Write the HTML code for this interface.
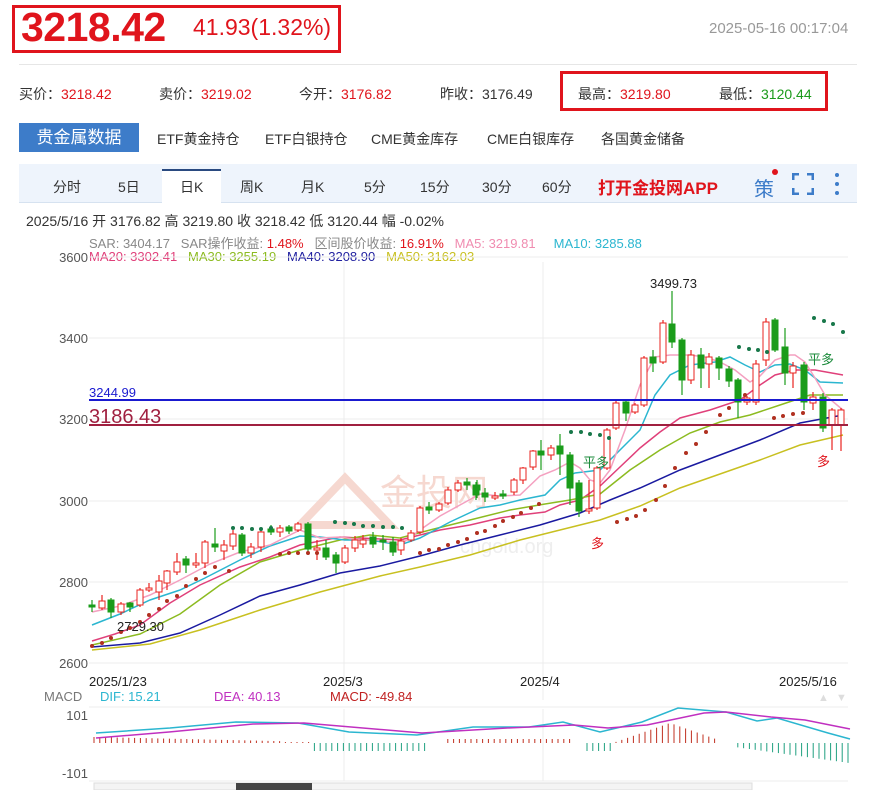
<!DOCTYPE html>
<html><head><meta charset="utf-8">
<style>
*{margin:0;padding:0;box-sizing:border-box}
body{width:874px;height:790px;background:#fff;font-family:"Liberation Sans","Noto Sans CJK SC",sans-serif;position:relative;overflow:hidden;color:#333}
.a{position:absolute;white-space:nowrap}
</style></head><body>
<div class="a" style="left:12px;top:5px;width:329px;height:48px;border:3px solid #e0141c"></div>
<div class="a" style="left:21px;top:4px;font-size:41px;font-weight:bold;color:#e0141c;letter-spacing:-0.5px">3218.42</div>
<div class="a" style="left:193px;top:14px;font-size:23px;color:#e0141c">41.93(1.32%)</div>
<div class="a" style="left:709px;top:20px;font-size:15px;color:#999">2025-05-16 00:17:04</div>
<div class="a" style="left:19px;top:64px;width:838px;height:1px;background:#e6e6e6"></div>
<div class="a" style="left:560px;top:71px;width:268px;height:40px;border:3px solid #e0141c"></div>
<div class="a" style="top:84px;left:19px;font-size:14px">买价：<span style="color:#e0141c">3218.42</span></div>
<div class="a" style="top:84px;left:159px;font-size:14px">卖价：<span style="color:#e0141c">3219.02</span></div>
<div class="a" style="top:84px;left:299px;font-size:14px">今开：<span style="color:#e0141c">3176.82</span></div>
<div class="a" style="top:84px;left:440px;font-size:14px">昨收：3176.49</div>
<div class="a" style="top:84px;left:578px;font-size:14px">最高：<span style="color:#e0141c">3219.80</span></div>
<div class="a" style="top:84px;left:719px;font-size:14px">最低：<span style="color:#1a9a1a">3120.44</span></div>
<div class="a" style="left:19px;top:123px;width:120px;height:29px;background:#3d7cc9;color:#fff;font-size:17px;line-height:29px;text-align:center">贵金属数据</div>
<div class="a" style="left:157px;top:129px;font-size:14px">ETF黄金持仓</div>
<div class="a" style="left:265px;top:129px;font-size:14px">ETF白银持仓</div>
<div class="a" style="left:371px;top:129px;font-size:14px">CME黄金库存</div>
<div class="a" style="left:487px;top:129px;font-size:14px">CME白银库存</div>
<div class="a" style="left:601px;top:129px;font-size:14px">各国黄金储备</div>
<div class="a" style="left:19px;top:164px;width:838px;height:39px;background:#eef4fc;border-bottom:1px solid #d6e2f0"></div>
<div class="a" style="left:162px;top:169px;width:59px;height:35px;background:#fff;border-top:2px solid #2a4a80"></div>
<div class="a" style="top:177px;left:53px;font-size:14px">分时</div>
<div class="a" style="top:177px;left:118px;font-size:14px">5日</div>
<div class="a" style="top:177px;left:180px;font-size:14px">日K</div>
<div class="a" style="top:177px;left:240px;font-size:14px">周K</div>
<div class="a" style="top:177px;left:301px;font-size:14px">月K</div>
<div class="a" style="top:177px;left:364px;font-size:14px">5分</div>
<div class="a" style="top:177px;left:420px;font-size:14px">15分</div>
<div class="a" style="top:177px;left:482px;font-size:14px">30分</div>
<div class="a" style="top:177px;left:542px;font-size:14px">60分</div>
<div class="a" style="top:174px;left:598px;font-size:17px;font-weight:bold;color:#e0141c">打开金投网APP</div>
<div class="a" style="top:173px;left:754px;font-size:20px;color:#3d7cc9">策</div>
<div class="a" style="top:169px;left:772px;width:6px;height:6px;border-radius:3px;background:#e0141c"></div>
<svg class="a" style="left:792px;top:173px" width="22" height="22"><path d="M1 7V1H7M15 1H21V7M21 15V21H15M7 21H1V15" fill="none" stroke="#3d7cc9" stroke-width="3"/></svg>
<svg class="a" style="left:833px;top:172px" width="8" height="24"><circle cx="4" cy="3" r="2" fill="#3d7cc9"/><circle cx="4" cy="12" r="2" fill="#3d7cc9"/><circle cx="4" cy="21" r="2" fill="#3d7cc9"/></svg>
<div class="a" style="top:211px;left:26px;font-size:14px;color:#333">2025/5/16 开 3176.82 高 3219.80 收 3218.42 低 3120.44 幅 -0.02%</div>
<div class="a" style="top:233px;left:89px;font-size:13px;color:#888">SAR: 3404.17 &nbsp; SAR操作收益: <span style="color:#e0141c">1.48%</span> &nbsp; 区间股价收益: <span style="color:#e0141c">16.91%</span> &nbsp; <span style="color:#f08cb0">MA5: 3219.81</span> &nbsp; &nbsp; <span style="color:#2bb6d0">MA10: 3285.88</span></div>
<div class="a" style="top:249px;left:89px;font-size:13px;color:#e0407a">MA20: 3302.41 &nbsp; <span style="color:#8cbb20">MA30: 3255.19</span> &nbsp; <span style="color:#2020a0">MA40: 3208.90</span> &nbsp; <span style="color:#c8c020">MA50: 3162.03</span></div>
<svg id="c" class="a" style="left:0;top:0" width="874" height="790"></svg>
<script>
var s='';
function L(x1,y1,x2,y2,c,w){s+='<line x1="'+x1+'" y1="'+y1+'" x2="'+x2+'" y2="'+y2+'" stroke="'+c+'" stroke-width="'+(w||1)+'"/>';}
function T(x,y,t,c,f,a){s+='<text x="'+x+'" y="'+y+'" fill="'+c+'" font-size="'+f+'" text-anchor="'+(a||'start')+'" font-family="Liberation Sans,Noto Sans CJK SC,sans-serif">'+t+'</text>';}
function P(pts,c,w){s+='<polyline fill="none" stroke="'+c+'" stroke-width="'+(w||1.5)+'" points="'+pts+'"/>';}
[[257,'3600'],[338,'3400'],[419,'3200'],[501,'3000'],[582,'2800'],[663,'2600']].forEach(function(g){L(89,g[0],848,g[0],'#ececec');T(88,g[0]+5,g[1],'#555',13,'end');});
L(344,262,344,700,'#ececec');L(543,262,543,700,'#ececec');L(344,709,344,781,'#ececec');L(543,709,543,781,'#ececec');
s+='<text x="380" y="505" fill="#f6d8d0" font-size="36" font-family="Noto Sans CJK SC,sans-serif">金投网</text><text x="460" y="553" fill="#eee" font-size="20" font-family="Liberation Sans,sans-serif">cngold.org</text>';
s+='<path d="M300 525 L345 478 L390 525 Z" fill="none" stroke="#f6d8d0" stroke-width="8"/>';
P('92,641 115,634 140,625 170,603 200,585 240,567 270,557 300,545 340,537 380,539 400,540 420,535 440,530 470,525 500,518 520,515 545,512 560,505 580,500 600,486 620,467 640,448 660,432 680,418 710,410 740,400 760,385 775,375 795,370 815,370 843,375','#e0407a');
P('92,645 140,634 180,614 220,585 260,562 300,550 340,540 370,535 400,538 430,530 470,520 510,510 545,504 570,500 600,494 630,470 660,450 690,433 720,422 750,415 780,405 810,395 843,395','#8cbb20');
P('92,647 140,643 180,633 220,615 260,596 300,585 340,573 380,566 420,556 460,545 500,535 540,525 580,513 610,500 640,488 680,470 720,455 760,440 800,423 843,415','#1a1aa0');
P('92,650 150,644 200,630 260,610 320,592 380,576 420,567 470,555 520,540 560,530 600,520 640,506 680,488 720,474 760,460 800,445 843,435','#c8c020');
P('92,625 120,614 150,600 180,590 205,578 240,560 270,546 300,536 320,537 345,540 370,540 400,545 420,538 450,522 480,508 500,505 520,500 545,495 560,480 575,473 600,470 620,450 640,430 655,395 670,375 690,365 715,362 730,357 745,365 760,372 775,365 790,364 805,370 820,382 843,383','#2bb6d0');
P('92,612 120,606 150,595 180,580 210,564 240,552 270,545 300,530 320,538 340,537 360,540 380,540 400,545 420,530 440,516 460,505 480,494 500,496 520,495 540,476 555,470 570,462 580,468 590,480 600,483 610,470 625,430 640,385 655,357 670,355 690,355 705,357 720,362 735,370 750,382 760,376 775,360 790,355 795,355 805,362 815,378 825,395 843,410','#f4a0c0');
var C=[[92,605,607,0,600,612],[102,601,608,1,595,610],[111,600,612,0,598,618],[121,604,612,1,602,615],[130,603,607,0,602,612],[140,590,605,1,588,607],[149,588,590,1,583,592],[159,581,592,1,575,600],[167,571,583,1,570,590],[177,562,572,1,553,575],[186,559,565,0,556,573],[196,563,565,1,553,568],[205,542,563,1,540,568],[215,544,547,0,528,552],[224,545,551,1,540,560],[233,534,546,1,530,550],[242,535,553,0,533,556],[251,547,553,1,543,558],[261,532,547,1,530,552],[271,529,532,0,525,535],[280,528,532,1,525,537],[289,527,531,0,525,534],[298,524,530,1,522,532],[308,524,549,0,522,555],[317,548,550,1,540,560],[326,548,557,0,540,560],[336,555,563,0,552,573],[345,548,562,1,545,564],[355,540,548,1,536,552],[363,540,544,1,535,548],[373,537,544,0,532,548],[383,540,542,0,535,550],[393,542,552,0,537,556],[401,541,550,1,538,555],[411,533,540,1,530,542],[420,508,532,1,506,534],[429,507,510,0,502,514],[439,504,510,1,502,512],[448,490,503,1,487,505],[458,483,490,1,480,492],[467,482,485,0,478,490],[476,485,495,0,482,500],[477,485,490,0,480,498],[485,493,497,0,488,502],[495,496,498,1,492,500],[503,494,496,0,490,499],[514,480,492,1,478,495],[523,468,480,1,467,484],[533,451,467,1,450,470],[541,451,455,0,440,470],[551,448,455,1,445,460],[560,446,454,0,434,475],[570,455,488,0,452,505],[579,483,511,0,480,517],[589,509,511,1,480,514],[597,468,508,1,466,510],[607,430,468,1,428,470],[616,403,428,1,400,430],[626,402,413,0,400,421],[635,405,412,1,403,414],[644,358,405,1,356,407],[653,357,363,0,350,372],[663,323,362,1,320,364],[672,324,342,0,291,348],[682,340,380,0,338,395],[691,355,380,1,350,384],[701,355,368,0,348,388],[709,357,364,1,353,388],[719,358,368,0,356,380],[729,369,381,0,366,387],[738,380,402,0,378,418],[747,398,402,1,396,405],[756,364,402,1,360,405],[766,322,360,1,318,366],[775,320,350,0,318,352],[785,347,373,0,328,385],[793,366,373,1,362,388],[804,365,402,0,362,410],[813,397,403,1,392,410],[823,397,428,0,393,432],[832,410,425,1,408,450],[841,410,425,1,408,451]];
C.forEach(function(c){var col=c[3]?'#e8231f':'#1a9c1a';L(c[0],c[4],c[0],c[5],col,1.2);
s+='<rect x="'+(c[0]-3)+'" y="'+c[1]+'" width="6" height="'+Math.max(1,c[2]-c[1])+'" fill="'+(c[3]?'#fff':col)+'" stroke="'+col+'" stroke-width="1"/>';});
var dr=[[92,646],[102,643],[111,638],[121,632],[130,628],[140,622],[149,615],[159,609],[167,601],[177,596],[186,586],[196,579],[205,573],[215,567],[229,571],[280,554],[289,553],[298,553],[308,553],[317,553],[420,553],[429,550],[439,549],[448,545],[458,542],[467,539],[477,533],[485,531],[495,526],[503,521],[513,517],[521,513],[531,508],[539,504],[617,522],[627,519],[636,516],[645,510],[656,500],[665,486],[675,468],[686,453],[696,444],[706,432],[720,415],[729,408],[745,395],[774,418],[783,416],[793,414],[803,413]];
dr.forEach(function(d){s+='<circle cx="'+d[0]+'" cy="'+d[1]+'" r="2" fill="#b03020"/>';});
var dg=[[233,528],[242,528],[252,529],[261,529],[271,528],[335,522],[345,523],[354,524],[363,526],[373,526],[383,527],[393,527],[402,528],[571,432],[581,432],[590,434],[600,435],[609,438],[739,347],[749,349],[758,350],[767,352],[814,318],[824,321],[833,324],[843,332]];
dg.forEach(function(d){s+='<circle cx="'+d[0]+'" cy="'+d[1]+'" r="2" fill="#18784a"/>';});
L(89,400,848,400,'#1a1ad0',2);T(89,397,'3244.99','#1a1ad0',13);
L(89,425,848,425,'#a02040',2);T(89,423,'3186.43','#a02040',20);
T(117,631,'2729.30','#222',13);T(650,288,'3499.73','#222',13);
T(583,467,'平多','#1a8a3a',13);T(808,364,'平多','#1a8a3a',13);
T(591,548,'多','#e0141c',13);T(817,466,'多','#e0141c',13);
T(89,686,'2025/1/23','#222',13);T(323,686,'2025/3','#222',13);T(520,686,'2025/4','#222',13);T(779,686,'2025/5/16','#222',13);
T(44,701,'MACD','#777',13);T(100,701,'DIF: 15.21','#2bb6d0',13);T(214,701,'DEA: 40.13','#c030c0',13);T(330,701,'MACD: -49.84','#c02020',13);
s+='<text x="818" y="701" fill="#ddd" font-size="11">▲</text><text x="836" y="701" fill="#ddd" font-size="11">▼</text>';
L(89,707,848,707,'#ececec');L(89,781,848,781,'#ececec');
T(88,720,'101','#555',13,'end');T(88,778,'-101','#555',13,'end');
for(var x=94;x<850;x+=5.8){var h;
 if(x<285)h=-(6-(x-94)/45);else if(x<313)h=-1;else if(x<425)h=8;else if(x<443)h=0;else if(x<572)h=-4;else if(x<585)h=0;else if(x<615)h=8;else if(x<720)h=-(20-Math.abs(x-670)*0.35);else if(x<735)h=0;else h=4+(x-735)*0.14;
 if(Math.abs(h)<0.5)continue;var col=h<0?'#c03020':'#20a080';L(x.toFixed(1),743,x.toFixed(1),743+h,col,1);}
P('96,733 170,728 236,722 298,723 349,732 417,735 473,727 529,727 563,722 600,732 642,722 678,708 726,712 757,721 777,718 828,733 850,739','#2bb6d0');
P('96,738 169,732 253,724 304,723 422,733 507,728 574,725 608,728 647,725 704,713 726,712 771,717 805,720 850,729','#c030c0');
s+='<rect x="94" y="783" width="658" height="7" fill="#f4f4f4" stroke="#ddd"/><rect x="236" y="783" width="76" height="7" fill="#444"/>';
document.getElementById('c').innerHTML=s;
</script>
</body></html>
